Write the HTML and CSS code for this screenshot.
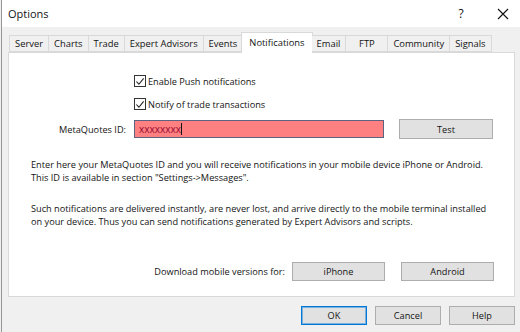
FILE: index.html
```html
<!DOCTYPE html>
<html lang="en">
<head>
    <meta charset="UTF-8">
    <title>Options</title>
    <link rel="stylesheet" href="styles.css">
</head>
<body>
    <div class="window">
        <header class="titlebar">
            <span class="title">Options</span>
            <div class="controls">
                <span class="help_btn">?</span>
                <span class="close_btn">
                    <svg width="12" height="12" viewBox="0 0 12 12"><path d="M1 1 L11 11 M11 1 L1 11" stroke="#111" stroke-width="1.1" fill="none"/></svg>
                </span>
            </div>
        </header>

        <div class="body">
            <ul class="tabs">
                <li>Server</li>
                <li>Charts</li>
                <li>Trade</li>
                <li>Expert Advisors</li>
                <li>Events</li>
                <li class="active">Notifications</li>
                <li>Email</li>
                <li class="wide">FTP</li>
                <li>Community</li>
                <li>Signals</li>
            </ul>

            <section class="panel">
                <div class="form">
                    <span></span>
                    <label class="check"><span class="box"><svg width="11" height="11" viewBox="0 0 11 11"><path d="M1.5 5.5 L4.3 8.5 L9.5 2" stroke="#222" stroke-width="1.2" fill="none"/></svg></span>Enable Push notifications</label>
                    <span></span>

                    <span></span>
                    <label class="check"><span class="box"><svg width="11" height="11" viewBox="0 0 11 11"><path d="M1.5 5.5 L4.3 8.5 L9.5 2" stroke="#222" stroke-width="1.2" fill="none"/></svg></span>Notify of trade transactions</label>
                    <span></span>

                    <span class="field_label">MetaQuotes ID:</span>
                    <div class="id_input"><span class="id_text">xxxxxxxx</span><span class="caret"></span></div>
                    <button class="btn">Test</button>
                </div>

                <p class="info">Enter here your MetaQuotes ID and you will receive notifications in your mobile device iPhone or Android.<br>This ID is available in section "Settings-&gt;Messages".</p>
                <p class="info">Such notifications are delivered instantly, are never lost, and arrive directly to the mobile terminal installed<br>on your device. Thus you can send notifications generated by Expert Advisors and scripts.</p>

                <div class="download">
                    <span>Download mobile versions for:</span>
                    <button class="btn">iPhone</button>
                    <button class="btn">Android</button>
                </div>
            </section>

            <footer class="actions">
                <button class="btn small default">OK</button>
                <button class="btn small">Cancel</button>
                <button class="btn small">Help</button>
            </footer>
        </div>
    </div>
</body>
</html>
```

FILE: styles.css
```css
*{
    margin:0;
    padding:0;
    box-sizing:border-box;
}
body{
    font-family:"Open Sans", "Noto Sans", sans-serif;
    font-size:9.2px;
    color:rgb(20, 20, 20);
    background-color:rgb(240, 240, 240);
}
.window{
    width:520px;
    height:332px;
    border-left:1px solid rgb(150, 150, 150);
    margin-left:1px;
    background-color:rgb(240, 240, 240);
}
.titlebar{
    height:27px;
    background-color:rgb(255, 255, 255);
    display:flex;
    justify-content:space-between;
    align-items:center;
    padding-left:6px;
}
.title{
    font-size:11px;
}
.controls{
    display:flex;
    align-items:center;
}
.help_btn{
    width:30px;
    text-align:center;
    font-size:12px;
    margin-right:9px;
}
.close_btn{
    width:36px;
    display:flex;
    justify-content:center;
}
.body{
    padding:5px 6px 0 6px;
}
ul li{
    list-style-type:none;
}
.tabs{
    height:20px;
    display:flex;
    align-items:flex-end;
    padding-left:1px;
    position:relative;
    z-index:1;
    font-size:9.4px;
}
.tabs li{
    height:17px;
    padding:0 5px;
    border:1px solid rgb(217, 217, 217);
    border-right:none;
    background-color:rgb(240, 240, 240);
    display:flex;
    align-items:center;
    justify-content:center;
}
.tabs li:last-child{
    border-right:1px solid rgb(217, 217, 217);
}
.tabs li.wide{
    min-width:42px;
}
.tabs li.active{
    height:21px;
    margin-bottom:-1px;
    margin-left:-1px;
    margin-right:-1px;
    padding:0 7px 2px;
    background-color:rgb(255, 255, 255);
    border-bottom:none;
    border-right:1px solid rgb(217, 217, 217);
}
.tabs li.active + li{
    border-left:none;
}
.panel{
    height:245px;
    background-color:rgb(255, 255, 255);
    border:1px solid rgb(217, 217, 217);
    padding:21px 20px 0 0;
}
.form{
    display:grid;
    grid-template-columns:125px 250px 109px;
    row-gap:9px;
    align-items:center;
}
.check{
    display:flex;
    align-items:center;
    height:14px;
}
.box{
    width:12px;
    height:12px;
    border:1px solid rgb(51, 51, 51);
    margin-right:2px;
    display:flex;
    justify-content:center;
    align-items:center;
}
.field_label{
    text-align:right;
    padding-right:8px;
    margin-top:-1px;
}
.id_input{
    height:18px;
    margin-top:-1px;
    background-color:rgb(255, 128, 128);
    border:1px solid rgb(90, 100, 130);
    display:flex;
    align-items:center;
    padding-left:4px;
}
.id_text{
    color:rgb(150, 10, 50);
    font-size:10px;
    line-height:10px;
}
.caret{
    width:1px;
    height:12px;
    background-color:rgb(20, 20, 20);
}
.btn{
    font-family:"Open Sans", "Noto Sans", sans-serif;
    font-size:9.2px;
    color:rgb(20, 20, 20);
    background-color:rgb(225, 225, 225);
    border:1px solid rgb(173, 173, 173);
    height:19px;
}
.form .btn{
    width:94px;
    height:20px;
    margin-top:-1px;
    justify-self:end;
}
.info{
    margin:19px 0 0 22px;
    line-height:13px;
    white-space:nowrap;
}
.info + .info{
    margin-top:18px;
}
.download{
    display:flex;
    justify-content:flex-end;
    align-items:center;
    margin-top:34px;
}
.download span{
    margin-right:7px;
}
.download .btn{
    width:93px;
}
.download .btn + .btn{
    margin-left:16px;
}
.actions{
    display:flex;
    justify-content:flex-end;
    gap:8px;
    padding-top:9px;
}
.btn.small{
    width:66px;
}
.btn.default{
    border:1px solid rgb(0, 120, 215);
    box-shadow:inset 0 0 0 1px rgba(0, 120, 215, 0.45);
}
```
